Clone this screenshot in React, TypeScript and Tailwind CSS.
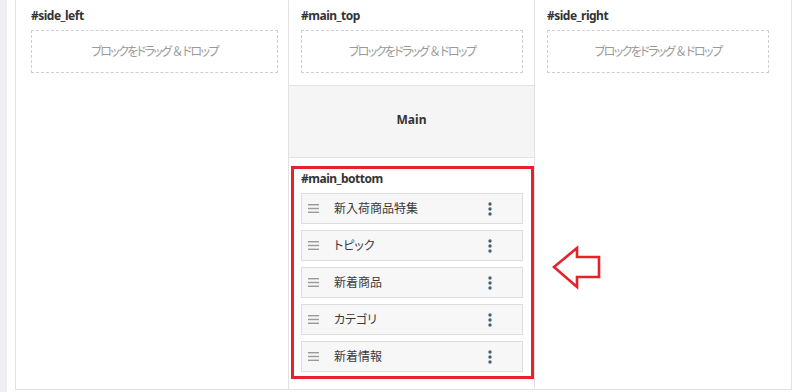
import React from "react";

const font = { fontFamily: '"Noto Sans", "Noto Sans CJK JP", sans-serif' };

function DropBox({ w }: { w: string }) {
  return (
    <div
      className={`${w} h-[43px] border border-dashed border-[#cfcfcf] flex items-center justify-center text-[12px] text-[#9a9a9a]`}
    >
      <span className="[font-feature-settings:'palt'] tracking-[-1.6px]">ブロックをドラッグ</span>
      <span className="px-[1px] tracking-[-2px]">＆</span>
      <span className="[font-feature-settings:'palt'] tracking-[-1.6px]">ドロップ</span>
    </div>
  );
}

function Title({ children }: { children: React.ReactNode }) {
  return (
    <div className="text-[12px] font-bold text-[#333] leading-[16px] mb-[6px] tracking-[-0.5px]">{children}</div>
  );
}

function Hamburger() {
  return (
    <svg width="11" height="9" viewBox="0 0 11 9" className="shrink-0">
      <rect x="0" y="0" width="11" height="1.4" fill="#9a9a9a" />
      <rect x="0" y="3.8" width="11" height="1.4" fill="#9a9a9a" />
      <rect x="0" y="7.6" width="11" height="1.4" fill="#9a9a9a" />
    </svg>
  );
}

function Kebab() {
  return (
    <svg width="4" height="14" viewBox="0 0 4 14" className="shrink-0">
      <circle cx="2" cy="2" r="1.7" fill="#4a6076" />
      <circle cx="2" cy="7" r="1.7" fill="#4a6076" />
      <circle cx="2" cy="12" r="1.7" fill="#4a6076" />
    </svg>
  );
}

function Item({ label }: { label: string }) {
  return (
    <div className="w-[222px] h-[31px] border border-[#dcdcdc] bg-[#f7f7f7] flex items-center pl-[6px] pr-[30px]">
      <Hamburger />
      <span className="ml-[15px] text-[12px] text-[#3a3a3a] flex-1 [font-feature-settings:'palt']">{label}</span>
      <Kebab />
    </div>
  );
}

export default function App() {
  const items = ["新入荷商品特集", "トピック", "新着商品", "カテゴリ", "新着情報"];
  return (
    <div className="relative w-[800px] h-[392px] bg-white flex overflow-hidden" style={font}>
      <div className="w-[7px] h-full bg-[#eeeef3]" />
      <div className="w-[8px]" />
      <div className="w-[777px] h-[390px] border-l border-b border-[#e2e2e2] flex">
        {/* col 1 */}
        <div className="w-[273px] h-full border-r border-[#e2e2e2] pl-[15px] pt-[8px]">
          <Title>#side_left</Title>
          <DropBox w="w-[247px]" />
        </div>
        {/* col 2 */}
        <div className="w-[246px] h-full border-r border-[#e2e2e2] flex flex-col">
          <div className="pl-[12px] pt-[8px]">
            <Title>#main_top</Title>
            <DropBox w="w-[222px]" />
          </div>
          <div className="mt-[12px] h-[73px] border-y border-[#e2e2e2] bg-[#f5f5f5] flex items-center justify-center pb-[4px] text-[12px] font-bold text-[#333]">
            Main
          </div>
          <div className="relative mt-[8px] ml-[2px] w-[243px] h-[213px]">
            <div className="absolute inset-0 border-[3px] border-[#e8202a]" />
            <div className="pl-[10px] pt-[5px]">
              <Title>#main_bottom</Title>
              <div className="flex flex-col gap-[6px]">
                {items.map((l) => (
                  <Item key={l} label={l} />
                ))}
              </div>
            </div>
          </div>
        </div>
        {/* col 3 */}
        <div className="w-[257px] h-full border-r border-[#e2e2e2] pl-[12px] pt-[8px]">
          <Title>#side_right</Title>
          <DropBox w="w-[222px]" />
        </div>
      </div>
      <svg className="absolute left-[550px] top-[244px]" width="54" height="48" viewBox="550 244 54 48">
        <path
          d="M554 267 L577 248 L577 257 L599 257 L599 277 L577 277 L577 287 Z"
          fill="none"
          stroke="#e8202a"
          strokeWidth="2.6"
          strokeLinejoin="miter"
        />
      </svg>
    </div>
  );
}
